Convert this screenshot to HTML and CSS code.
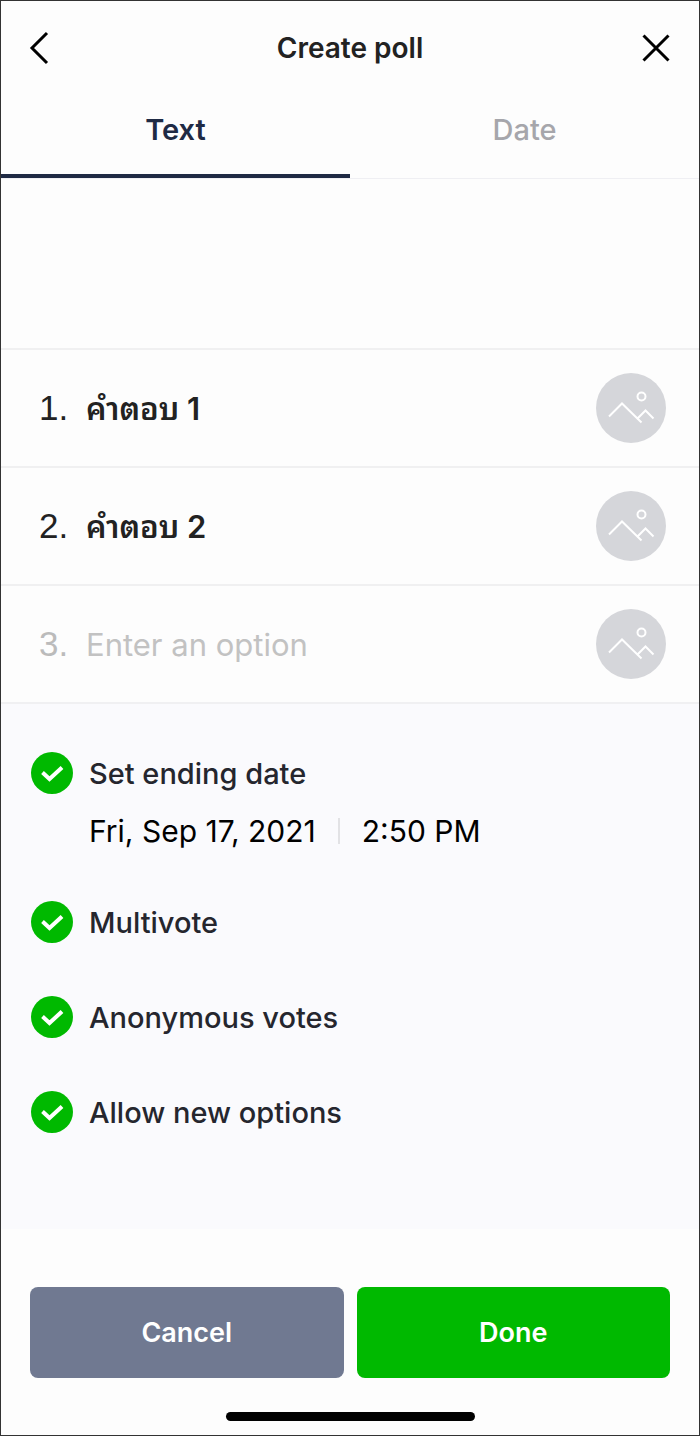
FILE: index.html
```html
<!DOCTYPE html>
<html lang="en">
<head>
<meta charset="utf-8">
<meta name="viewport" content="width=device-width, initial-scale=1">
<title>Create poll</title>
<link rel="stylesheet" href="styles.css">
</head>
<body>
<svg class="sprite" aria-hidden="true">
  <symbol id="picture" viewBox="0 0 70 70">
    <circle cx="45.500" cy="23.500" r="4"/>
    <path d="M13 43.500 26 30.500 45.500 49.500M41.500 45.500 49.500 37.500 57.500 45.500"/>
  </symbol>
  <symbol id="tick" viewBox="0 0 42 42">
    <path d="M11.500 20.500 18.500 27 31 15.500"/>
  </symbol>
</svg>
<form class="screen">
  <header class="header">
    <button type="button" class="icon-button" aria-label="Back">
      <svg class="nav-icon" viewBox="0 0 34 34"><path d="M20 2 5 17 20 32"/></svg>
    </button>
    <h1 class="title">Create poll</h1>
    <button type="button" class="icon-button" aria-label="Close">
      <svg class="nav-icon" viewBox="0 0 34 34"><path d="M4.500 4.500 29.500 29.500M29.500 4.500 4.500 29.500"/></svg>
    </button>
  </header>
  <nav class="tabs">
    <button type="button" class="tab tab-active">Text</button>
    <button type="button" class="tab">Date</button>
  </nav>
  <textarea class="question" aria-label="Question"></textarea>
  <ol class="answers">
    <li class="answer">
      <label class="number" for="answer1">1.</label>
      <input class="field" id="answer1" type="text" value="คำตอบ 1">
      <button type="button" class="picture" aria-label="Add picture to option 1"><svg class="picture-icon"><use href="#picture"/></svg></button>
    </li>
    <li class="answer">
      <label class="number" for="answer2">2.</label>
      <input class="field" id="answer2" type="text" value="คำตอบ 2">
      <button type="button" class="picture" aria-label="Add picture to option 2"><svg class="picture-icon"><use href="#picture"/></svg></button>
    </li>
    <li class="answer answer-empty">
      <label class="number" for="answer3">3.</label>
      <input class="field" id="answer3" type="text" placeholder="Enter an option">
      <button type="button" class="picture" aria-label="Add picture to option 3"><svg class="picture-icon"><use href="#picture"/></svg></button>
    </li>
  </ol>
  <section class="settings">
    <div class="setting">
      <label class="check">
        <span class="mark"><input class="box" type="checkbox" checked><svg class="tick"><use href="#tick"/></svg></span>
        <span class="check-text">Set ending date</span>
      </label>
      <div class="ending">
        <button type="button" class="ending-value">Fri, Sep 17, 2021</button>
        <button type="button" class="ending-value ending-time">2:50 PM</button>
      </div>
    </div>
    <label class="check">
      <span class="mark"><input class="box" type="checkbox" checked><svg class="tick"><use href="#tick"/></svg></span>
      <span class="check-text">Multivote</span>
    </label>
    <label class="check">
      <span class="mark"><input class="box" type="checkbox" checked><svg class="tick"><use href="#tick"/></svg></span>
      <span class="check-text">Anonymous votes</span>
    </label>
    <label class="check">
      <span class="mark"><input class="box" type="checkbox" checked><svg class="tick"><use href="#tick"/></svg></span>
      <span class="check-text">Allow new options</span>
    </label>
  </section>
  <footer class="footer">
    <div class="actions">
      <button type="button" class="action action-cancel">Cancel</button>
      <button type="submit" class="action action-done">Done</button>
    </div>
    <div class="home-bar"></div>
  </footer>
</form>
</body>
</html>
```

FILE: styles.css
```css
* {
  box-sizing: border-box;
}

body {
  margin: 0;
  font-family: Inter, "Noto Sans Thai Looped", Loma, Garuda, Waree, "Noto Sans Thai", sans-serif;
  font-size: 29px;
  line-height: 40px;
  color: #222;
}

button,
input,
textarea {
  margin: 0;
  padding: 0;
  border: 0;
  background: none;
  font: inherit;
  color: inherit;
}

.sprite {
  position: absolute;
  width: 0;
  height: 0;
}

.screen {
  display: flex;
  flex-direction: column;
  min-height: 100vh;
  border: 1px solid #333;
  background: #fdfdfd;
}

.header {
  display: flex;
  align-items: center;
  justify-content: space-between;
  padding: 24px 26px 12px;
}

.icon-button {
  display: flex;
}

.nav-icon {
  width: 34px;
  height: 34px;
  fill: none;
  stroke: #000;
  stroke-width: 3;
}

.title {
  margin: 0;
  font-size: 28px;
  line-height: 46px;
  font-weight: 600;
}

.tabs {
  display: flex;
  border-bottom: 1px solid #efeff3;
}

.tab {
  flex: 1;
  height: 95px;
  padding-top: 2px;
  border-bottom: 4px solid transparent;
  font-weight: 500;
  color: #a6a6ab;
}

.tab-active {
  border-color: #1f2a44;
  font-weight: 600;
  color: #1f2a44;
}

.question {
  display: block;
  width: 100%;
  height: 169px;
  padding: 24px 38px;
  resize: none;
}

.answers {
  margin: 0;
  padding: 0;
  list-style: none;
  border-bottom: 2px solid #f0f0f2;
}

.answer {
  display: flex;
  align-items: center;
  height: 118px;
  padding: 0 33px 0 38px;
  border-top: 2px solid #f0f0f1;
}

.number {
  width: 47px;
  font-family: "Liberation Sans", Arial, sans-serif;
  font-size: 35px;
}

.field {
  flex: 1;
  min-width: 0;
  height: 56px;
  padding-bottom: 5px;
  font-size: 31px;
  font-weight: 600;
}

.answer-empty .number {
  color: #bbb;
}

.answer-empty .field {
  padding-bottom: 0;
  font-weight: 400;
}

.field::placeholder {
  color: #c2c2c2;
  opacity: 1;
}

.picture {
  display: flex;
  border-radius: 50%;
  background: #d5d6da;
}

.picture-icon {
  width: 70px;
  height: 70px;
  fill: none;
  stroke: #fff;
  stroke-width: 2;
}

.settings {
  display: flex;
  flex-direction: column;
  flex: 1;
  gap: 53px;
  padding: 48px 30px 0;
  background: #fafafd;
}

.check {
  display: flex;
  align-items: center;
  gap: 16px;
  height: 42px;
  font-weight: 500;
  color: #25262e;
}

.check-text {
  padding-top: 2px;
}

.mark {
  display: grid;
}

.box,
.tick {
  grid-area: 1 / 1;
  width: 42px;
  height: 42px;
}

.box {
  appearance: none;
  border-radius: 50%;
  background: #d5d6da;
}

.box:checked {
  background: #00b900;
}

.tick {
  fill: none;
  stroke: #fff;
  stroke-width: 4;
  pointer-events: none;
}

.ending {
  display: flex;
  align-items: center;
  height: 54px;
  padding: 20px 0 0 58px;
  font-size: 30px;
  color: #000;
}

.ending-time {
  margin-left: 22px;
  padding-left: 22px;
  border-left: 2px solid #e2e2e5;
  line-height: 26px;
}

.footer {
  padding: 58px 29px 14px;
}

.actions {
  display: flex;
  gap: 13px;
}

.action {
  flex: 1;
  height: 91px;
  border-radius: 8px;
  font-size: 27px;
  font-weight: 600;
  color: #fff;
}

.action-cancel {
  background: #707991;
}

.action-done {
  background: #00b900;
}

.home-bar {
  width: 249px;
  height: 9px;
  margin: 34px auto 0;
  border-radius: 5px;
  background: #000;
}
```
